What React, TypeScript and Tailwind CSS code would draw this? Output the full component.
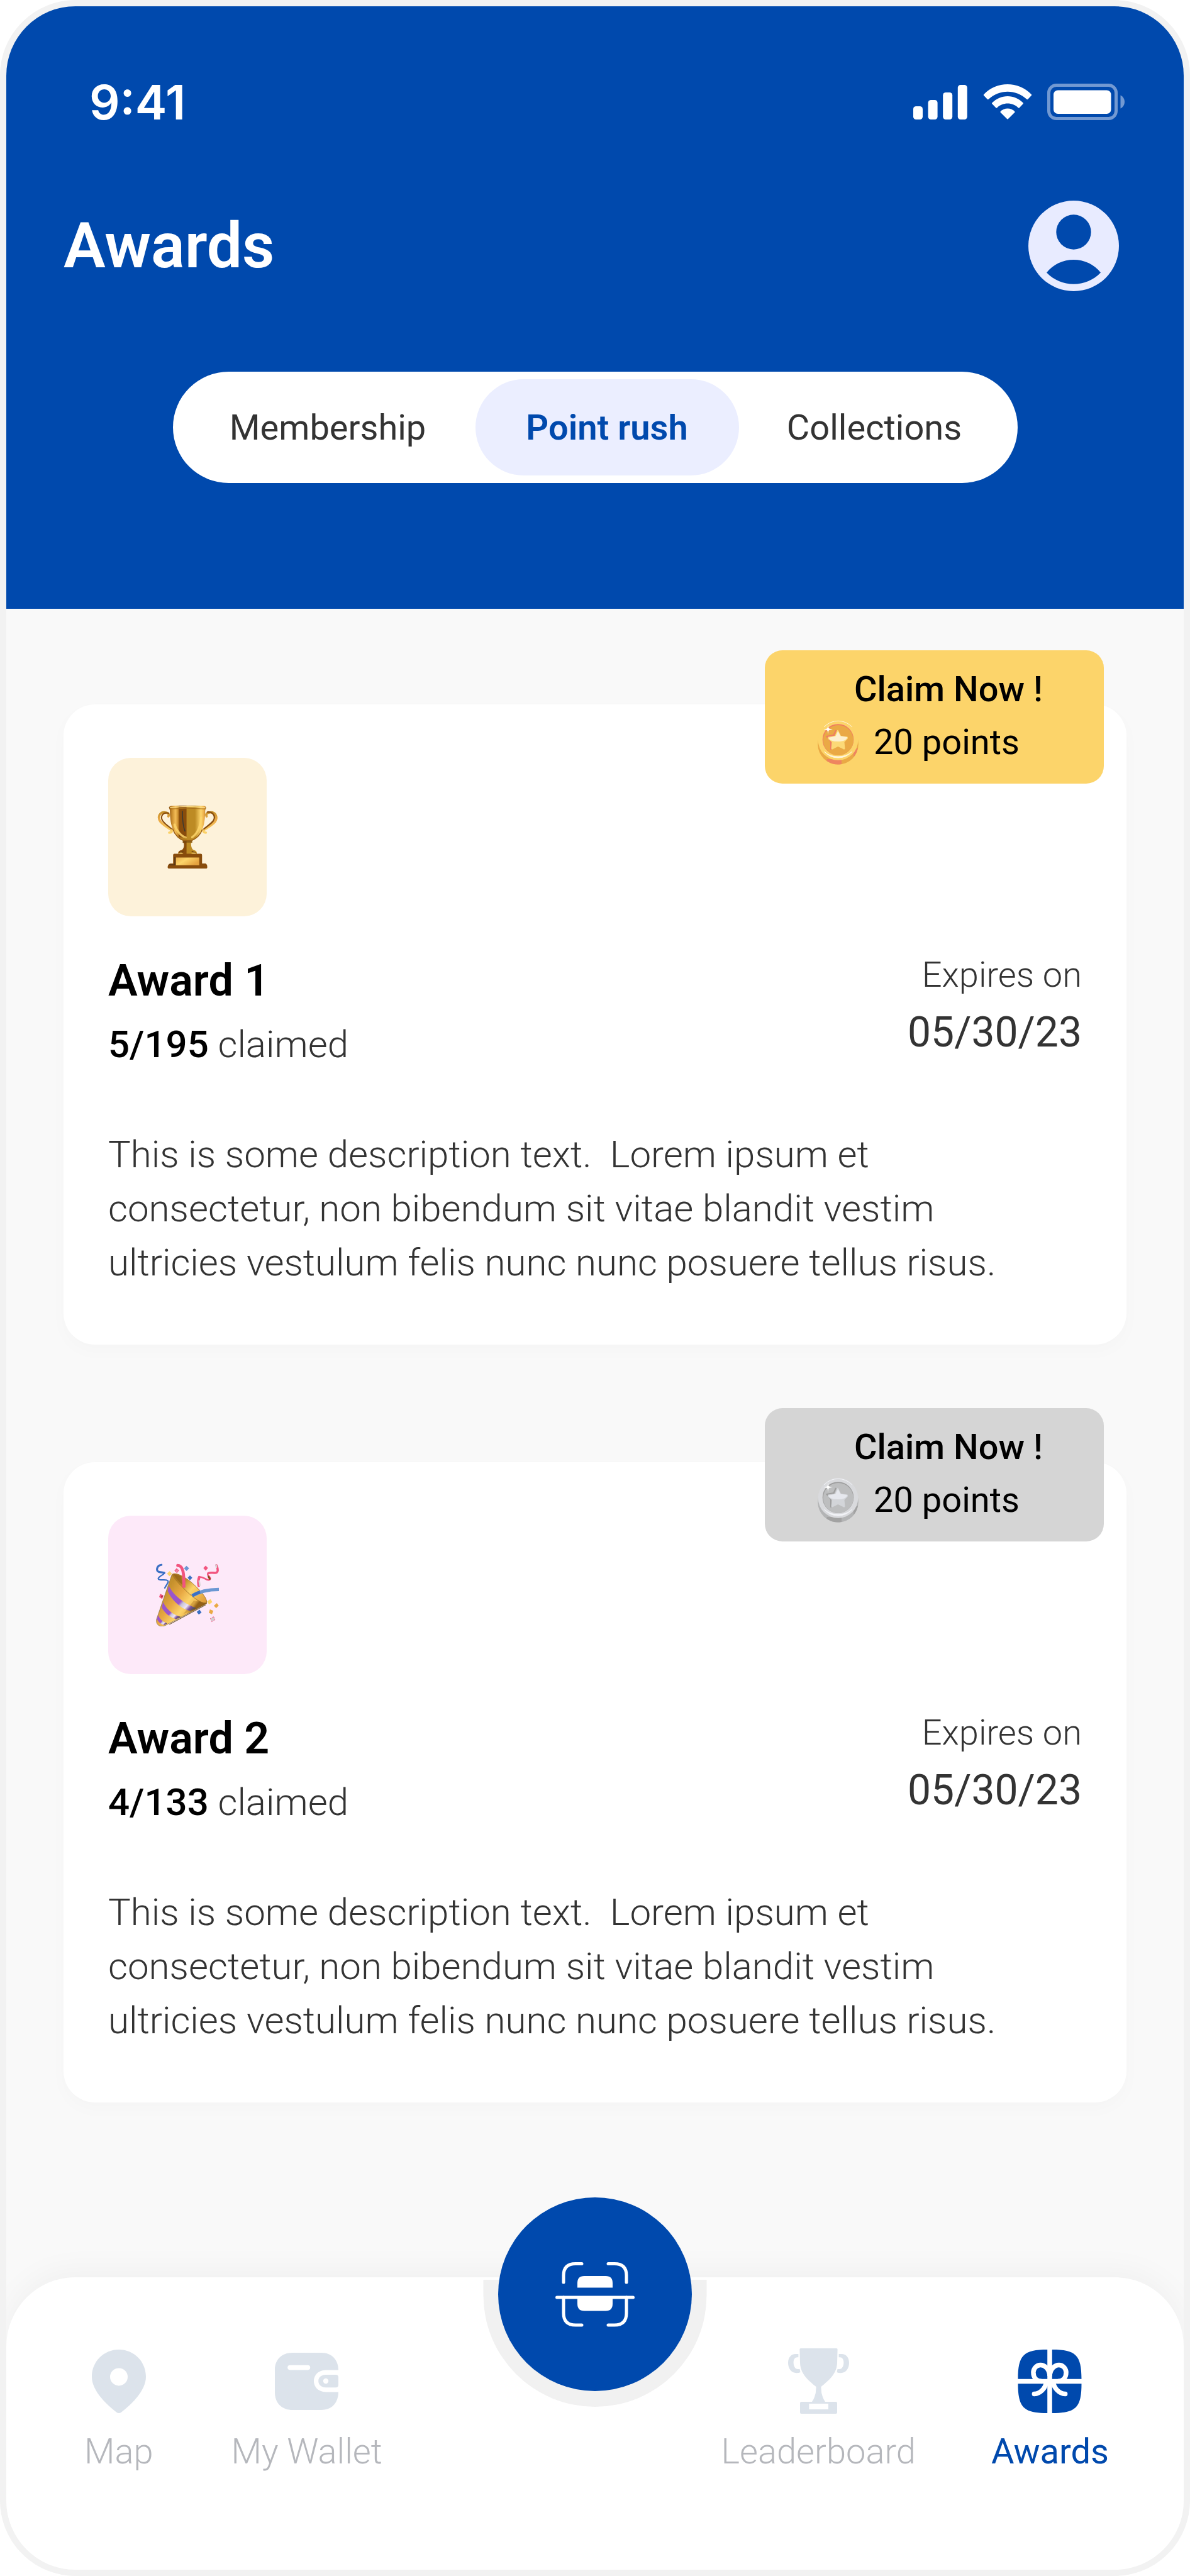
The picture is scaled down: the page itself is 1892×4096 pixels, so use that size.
import type { ReactNode } from "react";

const DESCRIPTION =
  "This is some description text.\u00a0 Lorem ipsum et consectetur, non bibendum sit vitae blandit vestim ultricies vestulum felis nunc nunc posuere tellus risus.";

const gold = {
  top: "#fcd46a",
  side: "#eaa945",
  shade: "#ee8560",
  face: "#eaa945",
  rim: "#ef7c62",
  star: "#fcd977",
  starLight: "#fdf0cf",
  shine: "#fff6dd",
};

const silver = {
  top: "#d9dadd",
  side: "#b3b4b5",
  shade: "#a2a2a2",
  face: "#bdbebf",
  rim: "#9d9d9d",
  star: "#d3d5d9",
  starLight: "#e6e8ee",
  shine: "#f3f4f8",
};

function StatusIcons() {
  return (
    <div className="flex items-center text-white">
      <svg width="87" height="55" viewBox="0 0 87 55" fill="currentColor" aria-hidden="true">
        <rect x="0" y="34" width="15" height="21" rx="4.5" />
        <rect x="23.6" y="24" width="15" height="31" rx="4.5" />
        <rect x="47.2" y="12" width="15" height="43" rx="4.5" />
        <rect x="70.8" y="0" width="15" height="55" rx="4.5" />
      </svg>
      <svg className="ml-6" width="78" height="56" viewBox="0 0 77.4 56" fill="currentColor" aria-hidden="true">
        <path d="M1 16C21 -5.3 56 -5.3 76.4 16Q77.4 17 76.4 18L71 23.8Q70 24.6 69 23.8C52 7.6 25.5 7.6 8.5 23.8Q7.5 24.6 6.5 23.8L1 18Q0 17 1 16Z" />
        <path d="M14 29.6C27.5 15.4 50 15.4 63.4 29.6Q64 30.4 63.4 31L57.3 37.4Q56.5 38 55.7 37.4C46.5 28.3 31 28.3 21.8 37.4Q21 38 20.2 37.4L14 31Q13.4 30.4 14 29.6Z" />
        <path d="M27.4 43.2C33 36.8 44.5 36.8 50 43.2Q50.6 44 50 44.7L39.4 55.2Q38.7 55.8 38 55.2L27.4 44.7Q26.8 44 27.4 43.2Z" />
      </svg>
      <svg className="ml-6" width="124" height="58" viewBox="0 0 124 58" aria-hidden="true">
        <rect x="2.5" y="2.5" width="107" height="53" rx="12" fill="none" stroke="#7299d2" strokeWidth="5" />
        <rect x="10" y="10.5" width="91.5" height="37.5" rx="7" fill="#fff" />
        <path d="M116.500 18.500C120.500 20.500 123 24.500 123 29S120.500 37.500 116.500 39.500Z" fill="#7299d2" />
      </svg>
    </div>
  );
}

function Avatar() {
  return (
    <svg width="144" height="144" viewBox="0 0 144 144" aria-hidden="true">
      <circle cx="72" cy="72" r="72" fill="#e8ebff" />
      <circle cx="72" cy="50" r="27.7" fill="#0049ad" />
      <path d="M29 114.500A55.300 55.300 0 0 1 115 114.500A59.700 59.700 0 0 1 29 114.500Z" fill="#0049ad" />
    </svg>
  );
}

function TrophyArt() {
  return (
    <svg width="100" height="100" viewBox="385 424 400 400" aria-hidden="true">
      <defs>
        <linearGradient id="cup" x1="467" x2="704" y1="0" y2="0" gradientUnits="userSpaceOnUse">
          <stop offset="0" stopColor="#8a5210" />
          <stop offset="0.08" stopColor="#c88a2c" />
          <stop offset="0.18" stopColor="#f3bd57" />
          <stop offset="0.25" stopColor="#c88a2c" />
          <stop offset="0.28" stopColor="#884c0c" />
          <stop offset="0.46" stopColor="#884c0c" />
          <stop offset="0.49" stopColor="#bd8b24" />
          <stop offset="0.7" stopColor="#bd8b24" />
          <stop offset="0.86" stopColor="#fcd46a" />
          <stop offset="0.95" stopColor="#eaa945" />
          <stop offset="1" stopColor="#9a6216" />
        </linearGradient>
        <linearGradient id="handle" x1="0" x2="0" y1="455" y2="600" gradientUnits="userSpaceOnUse">
          <stop offset="0" stopColor="#bd8b24" />
          <stop offset="0.4" stopColor="#eaa945" />
          <stop offset="1" stopColor="#fcd46a" />
        </linearGradient>
        <linearGradient id="plate" x1="0" x2="1" y1="0" y2="0.5">
          <stop offset="0" stopColor="#eab04c" />
          <stop offset="0.45" stopColor="#fcd46a" />
          <stop offset="1" stopColor="#e5a33f" />
        </linearGradient>
      </defs>
      <g fill="none" strokeLinecap="round">
        <path d="M464 492Q474 470 440 467C405 466 395 500 412 524C432 550 468 566 484 580Q490 595 469 596" stroke="url(#handle)" strokeWidth="15" />
        <path d="M466 472C430 462 410 492 427 520C445 545 465 555 482 570" stroke="#884c0c" strokeWidth="8" />
        <path d="M707 492Q697 470 731 467C766 466 778 500 760 526C740 550 706 566 688 580Q682 595 702 596" stroke="url(#handle)" strokeWidth="15" />
        <path d="M712 465C745 462 768 490 750 520C735 540 710 555 690 572" stroke="#884c0c" strokeWidth="9" />
      </g>
      <path
        d="M467 436Q468 428 480 426Q585 421 692 426Q704 428 704 440L698 452C698 540 680 600 645 628Q622 642 612 648L617 656L608 663C608 688 614 704 630 708Q646 714 645 728L638 740H532L525 724Q529 710 547 707C562 700 565 680 562 663L553 656L560 646C535 638 505 612 490 570C476 530 474 490 473 452Z"
        fill="url(#cup)"
      />
      <path d="M474 436Q585 424 698 436" stroke="#fcdc8a" strokeWidth="6" fill="none" />
      <path d="M474 445Q585 436 698 445" stroke="#a8701b" strokeWidth="4" fill="none" />
      <path d="M553 458C553 510 558 560 570 588" stroke="#3a3a34" strokeWidth="6" fill="none" />
      <path d="M503 545C515 585 545 618 575 628M672 500C668 560 650 600 615 625" stroke="#fcd46a" strokeWidth="14" fill="none" strokeLinecap="round" opacity="0.85" />
      <path d="M578 628L604 600L608 634L645 618L612 648H560L520 624Z" fill="#bd8b24" opacity="0.8" />
      <path d="M490 570C505 612 535 638 560 646H612C645 632 668 608 680 575" fill="none" stroke="#9a5f14" strokeWidth="6" />
      <path d="M555 655H616M530 728L560 714M612 714L642 728" stroke="#6e4310" strokeWidth="6" fill="none" />
      <path d="M533 732Q545 722 555 734M612 734Q625 722 638 732" stroke="#fcd46a" strokeWidth="10" fill="none" strokeLinecap="round" />
      <path d="M502 730H670Q678 730 678 738V792H700Q711 797 711 812V818Q711 824 703 824H467Q459 824 459 816Q460 796 476 792H494V738Q494 730 502 730Z" fill="#884c0c" />
      <rect x="512" y="754" width="148" height="49" fill="url(#plate)" />
      <path d="M505 752V800H470" stroke="#4b3319" strokeWidth="5" fill="none" />
    </svg>
  );
}

function PartyArt() {
  return (
    <svg width="100" height="100" viewBox="385 424 400 400" aria-hidden="true">
      <defs>
        <linearGradient id="cone" x1="430" y1="620" x2="600" y2="750" gradientUnits="userSpaceOnUse">
          <stop offset="0" stopColor="#c5902c" />
          <stop offset="0.4" stopColor="#e8a843" />
          <stop offset="0.72" stopColor="#fcd46a" />
          <stop offset="0.9" stopColor="#f0bb50" />
          <stop offset="1" stopColor="#8a5a14" />
        </linearGradient>
        <linearGradient id="mouth" x1="500" y1="490" x2="700" y2="670" gradientUnits="userSpaceOnUse">
          <stop offset="0" stopColor="#a87520" />
          <stop offset="0.3" stopColor="#bd8b24" />
          <stop offset="0.55" stopColor="#fcd46a" />
          <stop offset="1" stopColor="#dd9a38" />
        </linearGradient>
        <linearGradient id="stripe" x1="0" x2="1" y1="0" y2="0.8">
          <stop offset="0" stopColor="#9a55cc" />
          <stop offset="0.58" stopColor="#9a55cc" />
          <stop offset="0.66" stopColor="#c9c5d8" />
          <stop offset="0.8" stopColor="#efe4f4" />
          <stop offset="0.9" stopColor="#7d55a0" />
          <stop offset="1" stopColor="#55505a" />
        </linearGradient>
      </defs>
      <path d="M486 496L388 780Q384 812 410 822Q425 828 445 818L707 680Q714 655 640 610Q540 540 486 496Z" fill="url(#cone)" stroke="#8b7440" strokeWidth="3" />
      <path d="M488 494C510 475 580 515 622 555C670 598 710 645 708 672C690 684 640 656 600 620C555 578 500 525 488 494Z" fill="url(#mouth)" stroke="#a8782a" strokeWidth="4" />
      <path d="M498 492L545 505L552 560Q515 530 498 492Z" fill="#8d5e18" opacity="0.6" />
      <path d="M625 660L700 678L640 712L560 745Z" fill="#a06c1c" opacity="0.35" />
      <path d="M467 565C490 620 560 680 642 708L602 726C540 712 480 650 459 598Z" fill="url(#stripe)" />
      <path d="M430 668C450 715 490 750 545 764L512 778C470 765 435 735 422 703Z" fill="url(#stripe)" />
      <path d="M399 752C410 780 430 797 457 805L438 816C415 810 400 795 391 778Z" fill="url(#stripe)" />
      <path d="M470 812L700 688" stroke="#7b6540" strokeWidth="5" fill="none" />
      <g fill="none" strokeLinecap="round">
        <path d="M420 433C390 435 385 470 400 476C415 483 428 478 438 484" stroke="#3a70c4" strokeWidth="13" />
        <path d="M438 486C430 500 395 508 400 522C408 538 450 518 462 536C466 548 450 560 441 580" stroke="#3a70c4" strokeWidth="9" />
        <path d="M523 436C560 438 563 490 563 578" stroke="#f2557f" strokeWidth="19" strokeLinecap="butt" />
        <path d="M523 437L530 438" stroke="#f2557f" strokeWidth="19" />
        <path d="M616 629C655 605 710 589 785 589" stroke="#6b97d3" strokeWidth="21" strokeLinecap="butt" />
        <path d="M616 629C635 617 650 611 665 606" stroke="#3a70c4" strokeWidth="18" strokeLinecap="butt" />
        <path d="M769 435C783 465 780 484 760 484C745 484 730 480 718 486" stroke="#f2557f" strokeWidth="14" />
        <path d="M718 486C700 500 742 510 728 526C708 540 690 505 662 510" stroke="#f2557f" strokeWidth="10" />
        <path d="M660 512C652 530 655 548 657 565" stroke="#f2557f" strokeWidth="17" />
        <path d="M660 535L664 563M767 434L769 448" stroke="#d6d6d6" strokeWidth="10" />
        <path d="M719 508L727 522" stroke="#8a4a18" strokeWidth="11" />
      </g>
      <path d="M471 473L487 489L471 505L455 489Z" fill="#fcd46a" />
      <path d="M579 439L596 455L579 472L563 455Z" fill="#6b97d3" />
      <path d="M601 500L616 515L601 531L586 515Z" fill="#3a70c4" />
      <path d="M701 438L716 453L701 470L686 453Z" fill="#f2557f" />
      <path d="M516 454L532 468L518 485L502 470Z" fill="#f2557f" />
      <path d="M511 470L522 463M513 477L524 470" stroke="#e0d3da" strokeWidth="4" />
      <path d="M412 617L433 628L424 650L405 637Z" fill="#f2557f" />
      <path d="M417 631L430 628L423 645Z" fill="#a02c3c" />
      <path d="M662 718L675 736L657 749L644 732Z" fill="#3a70c4" />
      <path d="M732 650L743 670L722 685L711 665Z" fill="#fcd46a" />
      <path d="M772 676L784 692L768 708L753 693Z" fill="#eaa945" />
      <path d="M728 716L750 725L741 747L721 738Z" fill="#eaa945" />
      <path d="M751 763L761 781L740 794L731 774Z" fill="#d2cdd0" stroke="#f2557f" strokeWidth="4" strokeDasharray="12 8" />
    </svg>
  );
}

function Coin({ tone }: { tone: typeof gold }) {
  return (
    <svg width="65" height="71" viewBox="0 0 65 71" aria-hidden="true">
      <circle cx="32.500" cy="38.300" r="32.300" fill={tone.side} />
      <path d="M14.500 65A32.300 32.300 0 0 0 38 70V62H14.500Z" fill={tone.shade} />
      <path d="M57 59A32.300 32.300 0 0 0 64 44L57 48Z" fill={tone.shade} />
      <circle cx="32.500" cy="32" r="31.800" fill={tone.top} />
      <path d="M10 11A31 31 0 0 1 55 11" fill="none" stroke={tone.shine} strokeWidth="1" />
      <circle cx="32.500" cy="31" r="24.800" fill={tone.rim} />
      <circle cx="32.800" cy="32" r="24" fill={tone.face} />
      <path d="M29 16L25.500 24L14.500 26L21 34V47" fill="none" stroke={tone.rim} strokeWidth="2" />
      <path d="M32.300 15.600L37 25L47.500 26.500Q49 28 47.500 30L42.500 35L43.500 45.500Q42.500 47.500 40.500 46L32.300 42L24.500 46Q22 47.500 21.500 45L22.500 35L16.500 30Q15 27.500 17 26.500L27.500 25L30.500 17.500Q31.300 15.600 32.300 15.600Z" fill={tone.star} />
      <path d="M32.300 17.500L36.500 25.500L47 27Q46 34 32.300 34T17.500 28L28.500 25.500Z" fill={tone.starLight} />
      <path d="M10.600 50Q19 60 32.500 60T54.800 50Q46 58 32.500 58T10.600 50Z" fill={tone.shine} stroke={tone.shine} strokeWidth="0.800" />
      <path d="M16.500 7.500L17.500 13.500L24 14.800L17.500 16L16.500 22.500L15.500 16L9.500 14.800L15.500 13.500Z" fill="#fff" />
      <circle cx="16.500" cy="14.800" r="2.300" fill="#fff" />
    </svg>
  );
}

function PinIcon() {
  return (
    <svg width="86" height="101" viewBox="0 0 86 101" fill="currentColor" aria-hidden="true">
      <path
        fillRule="evenodd"
        d="M43 0C67 0 86 19 86 43C86 63 68 83 47 99.500Q43 102.500 39 99.500C18 83 0 63 0 43C0 19 19 0 43 0ZM43 29.400A14 14 0 1 0 43 57.400A14 14 0 1 0 43 29.400Z"
      />
    </svg>
  );
}

function WalletIcon() {
  return (
    <svg width="101" height="91" viewBox="0 0 101 91" fill="currentColor" aria-hidden="true">
      <path
        fillRule="evenodd"
        d="M28 0H74C90 0 101 11 101 27.500H81C70 27.500 62 35 62 45S70 62.500 81 62.500H101C101 80 90 91 74 91H28C11 91 0 80 0 63V27C0 11 11 0 28 0ZM24 19.800A3.800 3.800 0 0 0 24 27.400H52.400A3.800 3.800 0 0 0 52.400 19.800Z"
      />
      <path fillRule="evenodd" d="M81 35H97Q101 35 101 39V51Q101 55.200 97 55.200H81C74 55.200 69.200 51 69.200 45S74 35 81 35ZM81 40.800A4.200 4.200 0 1 0 81 49.200A4.200 4.200 0 1 0 81 40.800Z" />
    </svg>
  );
}

function CupIcon() {
  return (
    <svg width="97" height="104" viewBox="0 0 97 104" fill="currentColor" aria-hidden="true">
      <path d="M20 0H77Q78.600 0 78.600 1.500L78 23C77.500 40 66 50 52.500 61Q52 75 59 85H76Q78 85 78 87V102Q78 104 76 104H21Q19 104 19 102V87Q19 85 21 85H38Q45 75 44.500 61C31 50 19.500 40 19 23L18.400 1.500Q18.400 0 20 0ZM33.300 88V97H64V88Z" fillRule="evenodd" />
      <path d="M16.400 9H12C4.500 9 0 15 0 23C0 32 5 39.200 13.500 39.200Q17.500 39.200 19.500 38L18.500 33H15.500C11 33 8.600 28 8.600 22.500C8.600 17.500 11 14.300 14.500 14.300H16.400Z" />
      <path d="M80.600 9H85C92.500 9 97 15 97 23C97 32 92 39.200 83.500 39.200Q79.500 39.200 77.500 38L78.500 33H81.500C86 33 88.400 28 88.400 22.500C88.400 17.500 86 14.300 82.500 14.300H80.600Z" />
    </svg>
  );
}

function GiftIcon() {
  return (
    <svg width="102" height="101" viewBox="0 0 101.600 101.600" fill="currentColor" aria-hidden="true">
      <path d="M47 0C9 0 0 9 0 47H47ZM54.600 0C92.600 0 101.600 9 101.600 47H54.600ZM47 101.600C9 101.600 0 92.600 0 54.600H47ZM54.600 101.600C92.600 101.600 101.600 92.600 101.600 54.600H54.600Z" />
      <g fill="none" stroke="#fff" strokeWidth="7.500">
        <path d="M50.800 42C50 31 43 24.600 36 24.600C29 24.600 24.600 31 24.600 36.500C24.600 43 28 50.800 38 50.800" />
        <path d="M50.800 42C51.600 31 58.600 24.600 65.600 24.600C72.600 24.600 77 31 77 36.500C77 43 73.600 50.800 63.600 50.800" />
        <path d="M45.500 52C43.500 62 36 70.500 26 71" strokeLinecap="round" />
        <path d="M56.100 52C58.100 62 65.600 70.500 75.600 71" strokeLinecap="round" />
      </g>
    </svg>
  );
}

function ScanIcon() {
  return (
    <svg width="126" height="103" viewBox="0 0 126 103" aria-hidden="true">
      <g fill="none" stroke="#fff" strokeWidth="5" strokeLinecap="round">
        <path d="M13 32V21Q13 2.500 32 2.500H42" />
        <path d="M84 2.500H94Q113 2.500 113 21V32" />
        <path d="M13 56V81Q13 100 32 100H42" />
        <path d="M84 100H94Q113 100 113 81V56" />
        <path d="M2.500 56H123.500" />
      </g>
      <path d="M35 40.500V33Q35 22 46 22H80Q91 22 91 33V40.500ZM35 56H91V66Q91 77.500 80 77.500H46Q35 77.500 35 66Z" fill="#fff" />
    </svg>
  );
}

type AwardProps = {
  title: string;
  claimed: string;
  tile: string;
  art: ReactNode;
  badge: string;
  tone: typeof gold;
};

function AwardCard({ title, claimed, tile, art, badge, tone }: AwardProps) {
  return (
    <article className="relative rounded-[50px] bg-white px-[71px] pt-[85px] pb-[87px] shadow-[0_10px_30px_rgba(0,0,0,0.02)]">
      {/* Claim badge hangs over the top edge of the card */}
      <button
        type="button"
        className={`absolute -top-[86px] right-9 flex h-[212px] w-[539px] flex-col items-start justify-center rounded-[28px] pb-1 pl-[84px] text-[56px] leading-[84px] text-black ${badge}`}
      >
        <span className="pl-[58px] font-medium">Claim Now !</span>
        <span className="flex items-center gap-6">
          <Coin tone={tone} />
          20 points
        </span>
      </button>

      <div className={`flex size-[252px] items-center justify-center rounded-[36px] ${tile}`}>{art}</div>

      <div className="flex items-start justify-between">
        <div className="pt-[58px]">
          <h2 className="text-[70px] leading-[88px] font-semibold text-black">{title}</h2>
          <p className="mt-[18px] text-[60px] leading-[80px] font-light text-[#333]">
            <span className="font-medium text-black">{claimed}</span> claimed
          </p>
        </div>
        <div className="pt-[47px] text-right text-[#333]">
          <p className="text-[56px] leading-[92px] font-light">Expires on</p>
          <p className="text-[66px] leading-[92px]">05/30/23</p>
        </div>
      </div>

      <p className="mt-[92px] max-w-[1480px] text-[60px] leading-[86px] font-light text-[#333]">{DESCRIPTION}</p>
    </article>
  );
}

function NavItem({ icon, label, active = false }: { icon: ReactNode; label: string; active?: boolean }) {
  return (
    <a href="#" className={`flex flex-col items-center ${active ? "text-[#0049ad]" : "text-[#dce3eb]"}`}>
      <span className="flex h-[104px] items-center">{icon}</span>
      <span className={`mt-[26px] text-[56px] leading-[68px] ${active ? "" : "font-light text-[#b5b7bc]"}`}>{label}</span>
    </a>
  );
}

export default function App() {
  return (
    <div className="bg-white font-[Roboto,sans-serif]">
      <div className="overflow-hidden rounded-[120px] border-[10px] border-[#f2f2f2] bg-[#f9f9f9]">
        <header className="bg-[#0049ad] pt-[110px] pb-[200px]">
          <div className="flex h-[84px] items-center justify-between pr-[93px] pl-[132px]">
            <span className="font-[Inter,sans-serif] text-[76px] font-semibold text-white">9:41</span>
            <StatusIcons />
          </div>
          <div className="mt-[115px] flex items-center justify-between pr-[103px] pl-[91px]">
            <h1 className="text-[100px] leading-[120px] font-semibold text-white">Awards</h1>
            <button type="button" aria-label="Profile">
              <Avatar />
            </button>
          </div>
          <div className="mx-auto mt-[128px] grid h-[177px] w-[1343px] max-w-full grid-cols-[469fr_419fr_431fr] rounded-full bg-white p-3 text-[56px] text-[#333]">
            <button type="button">Membership</button>
            <button type="button" className="rounded-full bg-[#ebeeff] font-semibold text-[#0049ad]">
              Point rush
            </button>
            <button type="button">Collections</button>
          </div>
        </header>

        <main className="flex flex-col gap-[187px] px-[91px] pt-[152px] pb-[278px]">
          <AwardCard title="Award 1" claimed="5/195" tile="bg-[#fdf2da]" art={<TrophyArt />} badge="bg-[#fcd46a]" tone={gold} />
          <AwardCard title="Award 2" claimed="4/133" tile="bg-[#fde9f9]" art={<PartyArt />} badge="bg-[#d5d5d5]" tone={silver} />
        </main>

        <nav className="relative flex justify-between rounded-t-[110px] bg-white pt-[113px] pr-[119px] pb-[154px] pl-[124px] shadow-[0_-10px_50px_rgba(0,0,0,0.04)]">
          <div className="flex gap-[124px]">
            <NavItem icon={<PinIcon />} label="Map" />
            <NavItem icon={<WalletIcon />} label="My Wallet" />
          </div>
          <div className="flex gap-[120px]">
            <NavItem icon={<CupIcon />} label="Leaderboard" />
            <NavItem icon={<GiftIcon />} label="Awards" active />
          </div>
          {/* Scan button and the grey cradle it sits in */}
          <div className="absolute top-1 left-1/2 h-[202px] w-[355px] -translate-x-1/2 rounded-b-[178px] bg-[#f1f1f1]" />
          <button
            type="button"
            aria-label="Scan"
            className="absolute -top-[127px] left-1/2 flex size-[308px] -translate-x-1/2 items-center justify-center rounded-full bg-[#0049ad]"
          >
            <ScanIcon />
          </button>
        </nav>
      </div>
    </div>
  );
}
